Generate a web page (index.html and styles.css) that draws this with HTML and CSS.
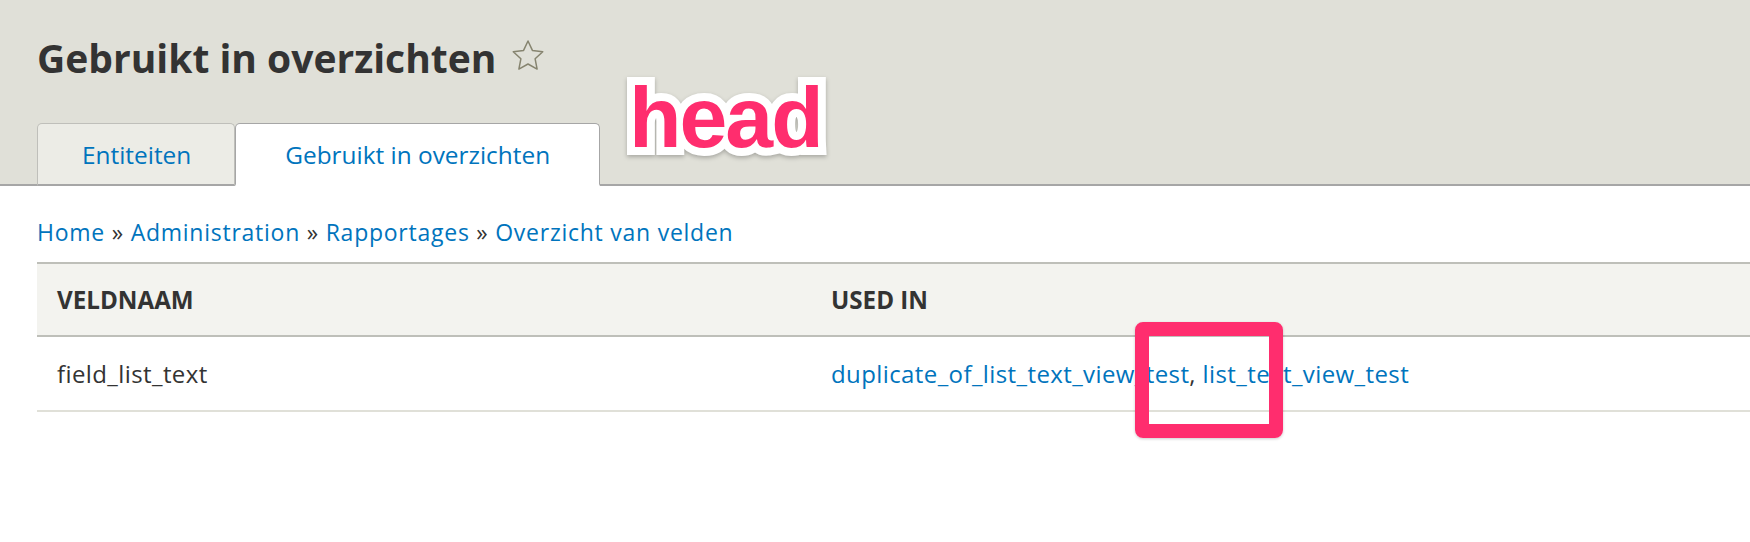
FILE: index.html
```html
<!DOCTYPE html>
<html lang="nl">
<head>
  <meta charset="UTF-8">
  <meta name="viewport" content="width=device-width, initial-scale=1.0">
  <title>Gebruikt in overzichten</title>
  <link rel="stylesheet" href="styles.css">
</head>
<body>
  <header class="page-head">
    <h1 class="page-title">
      Gebruikt in overzichten
      <a href="#" class="shortcut" title="Toevoegen aan snelkoppelingen">
        <svg width="32" height="31" viewBox="0 0 32 31">
          <path d="M16 1 L20.41 10.43 L30.74 11.71 L23.13 18.82 L25.11 29.04 L16 24 L6.89 29.04 L8.87 18.82 L1.26 11.71 L11.59 10.43 Z" />
        </svg>
      </a>
    </h1>
    <ul class="tabs">
      <li><a href="#">Entiteiten</a></li>
      <li class="active"><a href="#">Gebruikt in overzichten</a></li>
    </ul>
  </header>

  <main class="content">
    <nav class="breadcrumb">
      <a href="#">Home</a> » <a href="#">Administration</a> » <a href="#">Rapportages</a> » <a href="#">Overzicht van velden</a>
    </nav>

    <table class="fields">
      <thead>
        <tr>
          <th class="col-name">Veldnaam</th>
          <th>Used in</th>
        </tr>
      </thead>
      <tbody>
        <tr>
          <td>field_list_text</td>
          <td><a href="#">duplicate_of_list_text_view_test</a>, <a href="#">list_text_view_test</a></td>
        </tr>
      </tbody>
    </table>
  </main>

  <!-- annotations -->
  <span class="note">head</span>
  <span class="mark"></span>
</body>
</html>
```

FILE: styles.css
```css
body {
  margin: 0;
  font-family: "Open Sans", "DejaVu Sans", sans-serif;
  color: #333333;
  background-color: #ffffff;
}
a {
  color: #0074bd;
  text-decoration: none;
}
.page-head {
  height: 184px;
  padding: 0 0 0 37px;
  background-color: #e0e0d8;
  border-bottom: 2px solid #a6a6a6;
  box-sizing: content-box;
  display: flex;
  flex-direction: column;
}
.page-title {
  margin: 0;
  padding-top: 34px;
  font-size: 39px;
  line-height: 48px;
  font-weight: 700;
  color: #333333;
  display: flex;
  align-items: center;
  gap: 16px;
}
.shortcut {
  display: flex;
  margin-top: -6px;
}
.shortcut svg {
  fill: none;
  stroke: #86846f;
  stroke-width: 1.5;
  stroke-linejoin: round;
}
.tabs {
  list-style: none;
  margin: auto 0 -2px 0;
  padding: 0;
  display: flex;
}
.tabs li a {
  display: block;
  padding: 19px 43px 17px 44px;
  font-size: 24.4px;
  line-height: 24px;
  background-color: #ecece6;
  border: 1px solid #bfbfba;
  border-bottom: 2px solid #a6a6a6;
  border-radius: 5px 5px 0 0;
}
.tabs li.active a {
  padding: 19px 49px 17px;
  background-color: #ffffff;
  border-color: #a6a6a6;
  border-bottom-color: #ffffff;
}
.content {
  padding: 0 0 0 37px;
}
.breadcrumb {
  margin-top: 31px;
  font-size: 23px;
  letter-spacing: 0.75px;
  line-height: 30px;
  color: #333333;
}
.fields {
  width: 100%;
  margin-top: 15px;
  border-collapse: collapse;
}
.fields th {
  height: 71px;
  padding: 0 20px;
  text-align: left;
  font-size: 24.2px;
  font-weight: 700;
  text-transform: uppercase;
  background-color: #f3f3ef;
  border-top: 2px solid #bebfb9;
  border-bottom: 2px solid #bebfb9;
}
.fields th.col-name {
  width: 734px;
}
.fields td {
  height: 73px;
  padding: 0 20px;
  font-size: 24px;
  letter-spacing: 0.4px;
  border-bottom: 2px solid #e0e0d8;
}
.note {
  position: absolute;
  left: 629px;
  top: 67px;
  font-family: "Liberation Sans", Arial, sans-serif;
  font-weight: 700;
  font-size: 86px;
  letter-spacing: -2px;
  line-height: 100px;
  color: #ff2d6e;
  -webkit-text-stroke: 16px #ffffff;
  paint-order: stroke fill;
  filter: drop-shadow(0 2px 2px rgba(0, 0, 0, 0.25));
}
.mark {
  position: absolute;
  left: 1135px;
  top: 322px;
  width: 120px;
  height: 88px;
  border: 14px solid #ff2d6e;
  border-radius: 8px;
  box-shadow: 0 1px 3px rgba(0, 0, 0, 0.2);
}
```
